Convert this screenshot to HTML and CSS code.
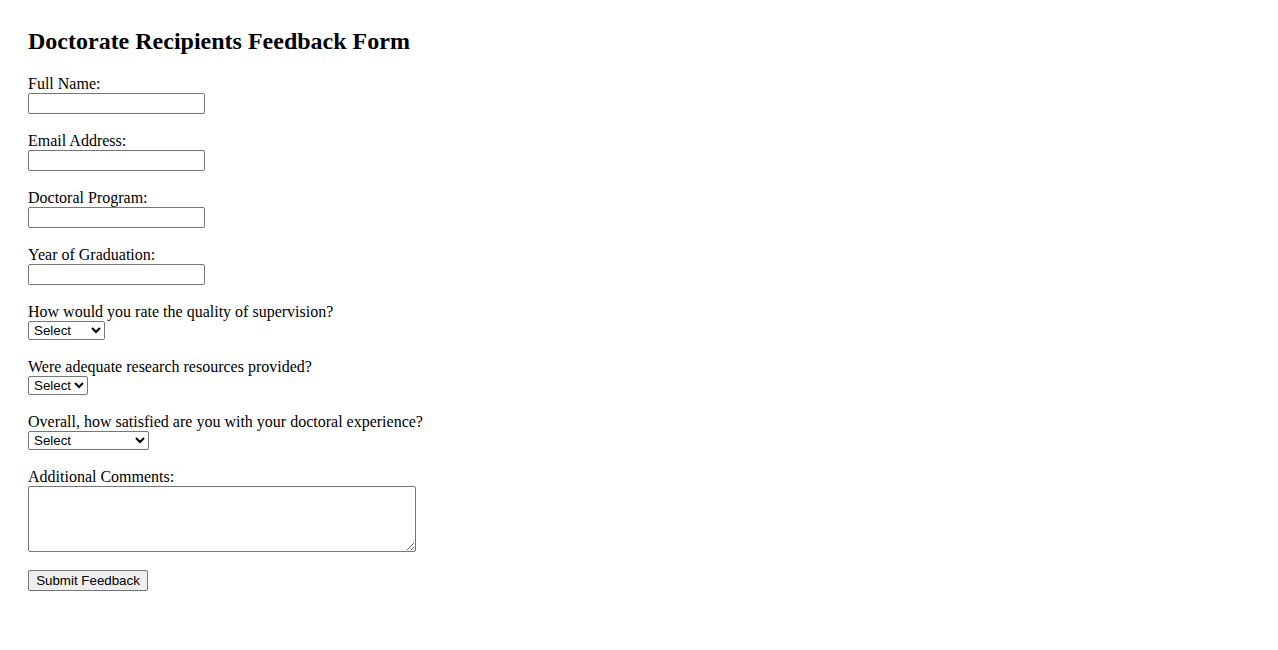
FILE: index.html
```html
<!DOCTYPE html>
<html lang="en">
<head>
<meta charset="utf-8">
<title>Doctorate Recipients Feedback Form</title>
<link rel="stylesheet" href="styles.css">
</head>
<body>
<main class="page">
  <h2 class="title">Doctorate Recipients Feedback Form</h2>
  <form class="form">
    <div class="field">
      <label class="label" for="name">Full Name:</label>
      <input class="text-input" type="text" id="name">
    </div>
    <div class="field">
      <label class="label" for="email">Email Address:</label>
      <input class="text-input" type="email" id="email">
    </div>
    <div class="field">
      <label class="label" for="program">Doctoral Program:</label>
      <input class="text-input" type="text" id="program">
    </div>
    <div class="field">
      <label class="label" for="year">Year of Graduation:</label>
      <input class="text-input" type="text" id="year">
    </div>
    <div class="field">
      <label class="label" for="supervision">How would you rate the quality of supervision?</label>
      <select class="select select-quality" id="supervision">
        <option>Select</option>
        <option>Excellent</option>
        <option>Good</option>
        <option>Average</option>
        <option>Poor</option>
      </select>
    </div>
    <div class="field">
      <label class="label" for="resources">Were adequate research resources provided?</label>
      <select class="select select-yesno" id="resources">
        <option>Select</option>
        <option>Yes</option>
        <option>No</option>
      </select>
    </div>
    <div class="field">
      <label class="label" for="satisfaction">Overall, how satisfied are you with your doctoral experience?</label>
      <select class="select select-satisfaction" id="satisfaction">
        <option>Select</option>
        <option>Very Satisfied</option>
        <option>Satisfied</option>
        <option>Neutral</option>
        <option>Dissatisfied</option>
        <option>Very Dissatisfied</option>
      </select>
    </div>
    <div class="field">
      <label class="label" for="comments">Additional Comments:</label>
      <textarea class="textarea" id="comments"></textarea>
    </div>
    <button class="button" type="submit">Submit Feedback</button>
  </form>
</main>
</body>
</html>
```
FILE: styles.css
```css
html, body {
  margin: 0;
  padding: 0;
  background: #ffffff;
}

.page {
  padding: 28px;
  font-family: "Liberation Serif", "Times New Roman", serif;
  font-size: 16px;
  color: #000000;
}

.title {
  margin: 0 0 20px 0;
  font-size: 24px;
  font-weight: bold;
  line-height: 27px;
}

.form {
  display: flex;
  flex-direction: column;
  align-items: flex-start;
}

.field {
  display: flex;
  flex-direction: column;
  align-items: flex-start;
  margin-bottom: 18px;
}

.label {
  display: block;
  line-height: 18px;
  height: 18px;
}

.text-input {
  box-sizing: border-box;
  width: 177px;
  height: 21px;
  margin: 0;
  padding: 1px 2px;
  border: 1px solid #767676;
  border-radius: 2px;
  font-family: "Liberation Sans", Arial, sans-serif;
  font-size: 13.33px;
  background: #ffffff;
}

.select {
  box-sizing: border-box;
  height: 19px;
  margin: 0;
  padding: 0 0 0 1px;
  border: 1px solid #767676;
  border-radius: 2px;
  font-family: "Liberation Sans", Arial, sans-serif;
  font-size: 13.33px;
  background: #ffffff;
  color: #000000;
}

.select-quality { width: 77px; }
.select-yesno { width: 60px; }
.select-satisfaction { width: 121px; }

.textarea {
  display: block;
  box-sizing: border-box;
  width: 388px;
  height: 66px;
  margin: 0;
  padding: 2px;
  border: 1px solid #767676;
  border-radius: 2px;
  font-family: "Liberation Mono", monospace;
  font-size: 13.33px;
  background: #ffffff;
}

.button {
  box-sizing: border-box;
  width: 120px;
  height: 21px;
  margin: 0;
  padding: 1px 6px;
  border: 1px solid #767676;
  border-radius: 2px;
  background: #efefef;
  color: #000000;
  font-family: "Liberation Sans", Arial, sans-serif;
  font-size: 13.33px;
}
```
